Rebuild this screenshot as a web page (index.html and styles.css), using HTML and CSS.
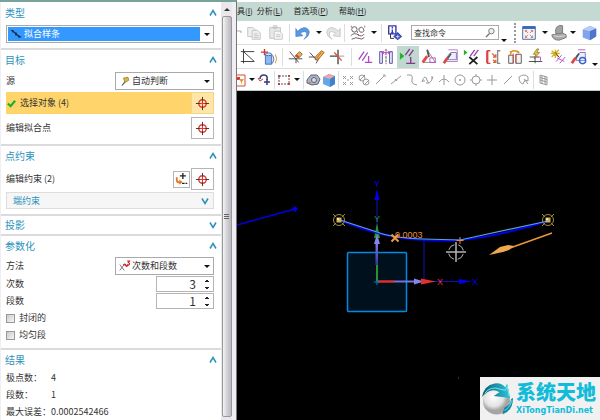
FILE: index.html
```html
<!DOCTYPE html>
<html lang="zh-CN">
<head>
  <meta charset="UTF-8">
  <meta name="viewport" content="width=device-width, initial-scale=1.0">
  <title>拟合样条</title>
  <link rel="stylesheet" href="styles.css">
</head>
<body>
  <svg class="defs" aria-hidden="true">
    <symbol id="chevron" viewBox="0 0 8 8"><path d="M1 6.500 4 1.500 7 6.500" fill="none" stroke="#2c92bd" stroke-width="1.500"/></symbol>
    <symbol id="target" viewBox="0 0 16 16">
      <circle cx="8" cy="8" r="4" fill="none" stroke="#e23a32" stroke-width="1.500"/>
      <path d="M8 1v14M1 8h14" stroke="#333"/>
      <path d="M8 5v6M5 8h6" stroke="#e23a32"/>
    </symbol>
    <symbol id="node" viewBox="0 0 14 14">
      <circle cx="7" cy="7" r="5.500" fill="none" stroke="#a08c3c"/>
      <path d="M1 1l3 3M13 1l-3 3M1 13l3-3M13 13l-3-3" stroke="#a08c3c"/>
      <path d="M4.500 4.500h5v5h-5z" fill="#c9b25c"/><path d="M5 5h2v2H5z" fill="#f0e4ab"/>
    </symbol>
  </svg>

  <div class="app">
    <aside class="dialog">
      <form class="sections">
        <section class="section">
          <h2>类型<svg><use href="#chevron"/></svg></h2>
          <div class="combo combo-type">
            <svg viewBox="0 0 16 16"><path d="M1 3c4 0 5 3 7 5s4 4 7 4" fill="none" stroke="#152b45" stroke-width="1.500"/><path d="M4 3v3M8 6v4M12 10v3" stroke="#152b45" stroke-width="2"/></svg>
            <select aria-label="类型"><option>拟合样条</option></select>
          </div>
        </section>

        <section class="section section-target">
          <h2>目标<svg><use href="#chevron"/></svg></h2>
          <div class="row">
            <label for="source">源</label>
            <div class="combo combo-half">
              <svg viewBox="0 0 16 16"><path d="M4 14l5-6" stroke="#444" stroke-width="1.500"/><path d="M6 4l6-1 1 4-5 3z" fill="#d9b93c" stroke="#8c7a3c"/></svg>
              <select id="source"><option>自动判断</option></select>
            </div>
          </div>
          <div class="row row-active">
            <span class="pick"><svg viewBox="0 0 10 10"><path d="M1 5l3 3 5-6" fill="none" stroke="#1faf2e" stroke-width="2.500"/></svg>选择对象 (4)</span>
            <button type="button" class="pick-btn" aria-label="选择对象"><svg><use href="#target"/></svg></button>
          </div>
          <div class="row">
            <span>编辑拟合点</span>
            <button type="button" class="pick-btn" aria-label="编辑拟合点"><svg><use href="#target"/></svg></button>
          </div>
        </section>

        <section class="section">
          <h2>点约束<svg><use href="#chevron"/></svg></h2>
          <div class="row">
            <span>编辑约束 (2)</span>
            <span class="buttons">
              <button type="button" class="add-btn" aria-label="添加"><svg viewBox="0 0 16 16"><path d="M9 1v7M5.500 4.500h7" stroke="#222" stroke-width="1.500"/><path d="M8 13h6" stroke="#222" stroke-width="1.500" stroke-dasharray="3 1"/><path d="M2 6v3q0 3 4 3" fill="none" stroke="#e8711c" stroke-width="2"/><path d="M5 8.500v6l3.500-3z" fill="#e8711c"/></svg></button>
              <button type="button" class="pick-btn" aria-label="编辑约束"><svg><use href="#target"/></svg></button>
            </span>
          </div>
          <button type="button" class="subgroup">端约束<svg class="down"><use href="#chevron"/></svg></button>
        </section>

        <section class="section section-closed">
          <h2>投影<svg class="down"><use href="#chevron"/></svg></h2>
        </section>

        <section class="section section-params">
          <h2>参数化<svg><use href="#chevron"/></svg></h2>
          <div class="row">
            <label for="method">方法</label>
            <div class="combo combo-half">
              <svg viewBox="0 0 16 16"><path d="M1 6l6 8M7 6l-6 8" stroke="#555"/><path d="M6 7q2-3 3 0t3-1" fill="none" stroke="#cf2027" stroke-width="2"/><path d="M11 1.500h3l-1.500 2q2 0 1.500 2t-3 1" fill="none" stroke="#cf2027" stroke-width="1.500"/></svg>
              <select id="method"><option>次数和段数</option></select>
            </div>
          </div>
          <div class="row">
            <label for="degree">次数</label>
            <div class="spin"><input id="degree" type="text" value="3"><i></i></div>
          </div>
          <div class="row">
            <label for="segments">段数</label>
            <div class="spin"><input id="segments" type="text" value="1"><i></i></div>
          </div>
          <label class="check"><input type="checkbox">封闭的</label>
          <label class="check"><input type="checkbox">均匀段</label>
        </section>

        <section class="section section-result">
          <h2>结果<svg><use href="#chevron"/></svg></h2>
          <dl>
            <dt>极点数：</dt><dd>4</dd>
            <dt>段数：</dt><dd>1</dd>
            <dt>最大误差：</dt><dd>0.0002542466</dd>
          </dl>
        </section>
      </form>
      <div class="scrollbar"><div class="thumb"></div></div>
    </aside>

    <main class="workspace">
      <nav class="menubar">
        <a href="#">具(<u>I</u>)</a>
        <a href="#">分析(<u>L</u>)</a>
        <a href="#">首选项(<u>P</u>)</a>
        <a href="#">帮助(<u>H</u>)</a>
      </nav>

      <div class="toolbar">
        <span class="edge"><svg viewBox="0 0 6 20"><path d="M0 8h4v2" fill="none" stroke="#aaa"/></svg></span>
        <button class="tool" aria-label="复制"><svg viewBox="0 0 20 20" fill="#eee" stroke="#c4c4c4"><path d="M3 4h6l3 3v7H3z"/><path d="M8 7h6l3 3v7H8z"/><path d="M10 11h4M10 13h5M10 15h5"/></svg></button>
        <button class="tool" aria-label="粘贴"><svg viewBox="0 0 20 20" fill="#e8e8e8" stroke="#c4c4c4"><path d="M3 4h12v12H3zM7 2h4v3H7z"/><path d="M8 8h6l3 3v6H8z" fill="#f6f6f6"/><path d="M10 12h5M10 14h5"/></svg></button>
        <span class="sep"></span>
        <button class="tool" aria-label="撤消"><svg viewBox="0 0 20 20"><path d="M2 5v9l8-1-3-3q6-3 7 0t-3 7q6-3 6-8-1-5-6-5-4 1-7 4z" fill="#5a98e2" stroke="#3a78bd" stroke-width=".6"/></svg></button>
        <span class="caret"></span>
        <button class="tool small" aria-label="重做"><svg viewBox="0 0 20 20"><path d="M18 5v9l-8-1 3-3q-6-3-7 0t3 7q-6-3-6-8 1-5 6-5 4 1 7 4z" fill="#e4e4e4" stroke="#c6c6c6"/></svg></button>
        <span class="sep"></span>
        <button class="tool" aria-label="曲线"><svg viewBox="0 0 20 20" fill="none" stroke="#555"><circle cx="6" cy="6" r="3"/><path d="M11 5q3-3 5 0t-1 4q-4 1-4-4M2 13q4-4 8-1t7-1M3 17q5-3 8-1t6-1"/><path d="M2 3h1M9 9h1M17 3h1M10 12h1" stroke="#d44" stroke-width="2"/></svg></button>
        <span class="caret"></span>
        <span class="sep"></span>
        <button class="tool" aria-label="信息"><svg viewBox="0 0 20 20"><path d="M3 2h8v9H3z" fill="#fff" stroke="#3439a8" stroke-width="1.500"/><path d="M7 3v2M7 6v4M5.500 10h3" stroke="#3439a8" stroke-width="1.500"/><path d="M5 11v5h4" fill="none" stroke="#222"/><path d="M13 9l5 5-5 4-5-4z" fill="#3d4db8"/><path d="M11 14h4M13 12v4" stroke="#cbd5ff"/></svg></button>
        <div class="search">
          <input type="text" value="查找命令" aria-label="查找命令">
          <svg viewBox="0 0 12 12"><circle cx="7" cy="4.500" r="3" fill="#eee" stroke="#777"/><path d="M5 7l-4 4" stroke="#777" stroke-width="1.500"/></svg>
        </div>
        <span class="caret low"></span>
        <span class="grip"></span>
        <button class="tool" aria-label="适合窗口"><svg viewBox="0 0 20 20"><path d="M3 3h14v14H3z" fill="#f1f6fd" stroke="#3b62ad"/><path d="M3 4h14" stroke="#3567c2" stroke-width="3"/><path d="M6 7l3 3M14 7l-3 3M6 15l3-3M14 15l-3-3M6 9V7h2M12 7h2v2M6 13v2h2M12 15h2v-2" fill="none" stroke="#e46a42"/></svg></button>
        <span class="caret"></span>
        <button class="tool small" aria-label="定向视图"><svg viewBox="0 0 20 20"><path d="M7 4q4-4 7-2v9l-7 1q-2-4 0-8z" fill="#a2a2a2" stroke="#777"/><path d="M2 12l12-2 4 2v3l-8 3q-7 0-8-6z" fill="#aaa" stroke="#777"/><path d="M4 13q6 2 13 0" fill="none" stroke="#ddd"/></svg></button>
        <span class="caret"></span>
        <button class="tool" aria-label="着色"><svg viewBox="0 0 20 20"><path d="M3 6l8-4 7 3v9l-7 4-8-3z" fill="#7fa5ec"/><path d="M3 6l8-4 7 3-7 3z" fill="#b4cdf8"/><path d="M11 8l7-3v9l-7 4z" fill="#5274c8"/></svg></button>
      </div>

      <div class="toolbar">
        <button class="tool" aria-label="草图"><svg viewBox="0 0 20 20"><path d="M2 4h15M5 1v16M5 4l12 11M2 15h15" fill="none" stroke="#333"/></svg></button>
        <button class="tool" aria-label="添加体"><svg viewBox="0 0 20 20"><path d="M5 1v7M1 4.500h8" stroke="#dc2f2f" stroke-width="1.500"/><path d="M6 7h7v11H6z" fill="#8eb8ee" stroke="#3d69b4"/><ellipse cx="9.500" cy="7" rx="3.500" ry="1.500" fill="#d3e4fa" stroke="#3d69b4"/><path d="M14 8q3 4 0 9" fill="none" stroke="#3d69b4"/><path d="M17 7q3 5 0 10" fill="none" stroke="#df8b2e"/></svg></button>
        <span class="sep"></span>
        <button class="tool" aria-label="快速修剪"><svg viewBox="0 0 20 20"><path d="M3 4l10 12M2 12h15M10 11v6" stroke="#444" fill="none"/><path d="M9 9l5-5 3 3-4 4z" fill="#e6b34a" stroke="#8a6322"/><path d="M9 9l2-2 3 3-2 1z" fill="#d34141"/></svg></button>
        <button class="tool" aria-label="快速延伸"><svg viewBox="0 0 20 20"><path d="M2 5l8 9M1 10h7M9 17l4-7" stroke="#444" fill="none"/><path d="M8 13l1-4 6-6 3 2-6 7z" fill="#efbd4f" stroke="#9b5c20"/><path d="M10 11l5-6" stroke="#df4d28"/></svg></button>
        <button class="tool" aria-label="制作拐角"><svg viewBox="0 0 20 20"><path d="M1 9h9M10 9v9M10 2v7" stroke="#444" stroke-width="1.500"/><path d="M10 9h7" stroke="#999"/><path d="M6 5l8 9" stroke="#e84b3b" stroke-width="1.500"/></svg></button>
        <span class="sep"></span>
        <button class="tool" aria-label="几何约束"><svg viewBox="0 0 20 20"><path d="M3 13l6-9M7 14l6-9M14 9v7M10 16h8" stroke="#b04bc4" stroke-width="1.500"/></svg></button>
        <button class="tool" aria-label="设为对称"><svg viewBox="0 0 20 20"><path d="M6 4H3v13h3zM14 4h3v13h-3z" fill="#ececff" stroke="#4a459d"/><path d="M10 1v17" stroke="#444" stroke-dasharray="3 1"/><path d="M5 5h10M8 3L6 5l2 2M12 3l2 2-2 2" fill="none" stroke="#c13dc3"/></svg></button>
        <button class="tool on" aria-label="显示约束"><svg viewBox="0 0 20 20"><path d="M1 5v8l5-4z" fill="#26b32b"/><path d="M7 8l5-7M11 9l5-7M13 10v7M8 17h10" stroke="#8b3590" stroke-width="1.500"/></svg></button>
        <button class="tool" aria-label="自动约束"><svg viewBox="0 0 20 20"><path d="M8 2l9 14M3 16h15" fill="none" stroke="#888"/><path d="M11 11h6v5h-6z" fill="none" stroke="#c04ac3"/><path d="M8 2l2 8" stroke="#555" stroke-width="2"/><path d="M8 9l-5 7" stroke="#e34848" stroke-width="3"/></svg></button>
        <button class="tool" aria-label="自动尺寸"><svg viewBox="0 0 20 20"><path d="M6 13V9l4-4h6v8z" fill="#eef" stroke="#7676ae"/><path d="M7 2h10v13M5 15h12" fill="none" stroke="#b576c5"/><path d="M10 6l-4 6" stroke="#555" stroke-width="2"/><path d="M6 11l-4 6" stroke="#df4545" stroke-width="3"/></svg></button>
        <button class="tool" aria-label="关系查找"><svg viewBox="0 0 20 20"><path d="M1 2v6l4-3z" fill="#26b32b"/><path d="M8 9l5-7M12 9l5-7" stroke="#984aa4" stroke-width="1.500"/><path d="M7 10l9 8M16 10l-9 8" stroke="#222" stroke-width="2"/></svg></button>
        <button class="tool" aria-label="转换参考"><svg viewBox="0 0 20 20"><path d="M6 3H3v14h3M2 3v14" fill="none" stroke="#dc4444" stroke-width="1.500"/><path d="M8 6l4 4M9 13l3 3M12 7v3H9M12 13v3H9" fill="none" stroke="#dc6a33" stroke-width="1.500"/><path d="M17 3h-3v14h3" fill="none" stroke="#888" stroke-width="1.500"/></svg></button>
        <button class="tool" aria-label="备选解"><svg viewBox="0 0 20 20"><path d="M3 8h5v9H3zM11 7h6v10h-6z" fill="#f3f3f3" stroke="#555"/><path d="M5 8q0-5 4-5t5 3M4 4h3M12 3l3 2" fill="none" stroke="#e88d2b" stroke-width="1.500"/><path d="M8 6v11M11 7v10" stroke="#c54747"/></svg></button>
        <button class="tool" aria-label="自动判断约束"><svg viewBox="0 0 20 20"><path d="M2 15h15M9 9v8M3 10h10" stroke="#444" fill="none"/><path d="M11 10h4v5" fill="none" stroke="#c04ac3"/><path d="M11 1L7 7h3l-2 5 6-7h-3l2-4z" fill="#f4c936" stroke="#71612b" stroke-width=".7"/></svg></button>
        <button class="tool" aria-label="连续约束"><svg viewBox="0 0 20 20"><path d="M7 2v9M2 6h10M3 3l8 7M11 2L3 10" stroke="#d7af23" stroke-width="1.500"/><path d="M7 5l4 5" stroke="#444"/><path d="M8 15l6-7M12 17l6-7M9 11l8 4" stroke="#b04bc4"/></svg></button>
        <button class="tool" aria-label="连续尺寸"><svg viewBox="0 0 20 20"><path d="M7 9l4-4h6v9H7z" fill="#eef" stroke="#7676ae"/><path d="M9 2h8" stroke="#c54ac3"/><circle cx="14" cy="14" r="3.500" fill="none" stroke="#375dd8" stroke-width="1.500"/><path d="M10 6l-4 6" stroke="#555" stroke-width="2"/><path d="M6 11l-4 6" stroke="#df4545" stroke-width="3"/></svg></button>
        <span class="caret low"></span>
      </div>

      <div class="toolbar toolbar-snap">
        <button class="tool first" aria-label="过滤器"><svg viewBox="0 0 10 20"><path d="M0 5h8v11H0" fill="#fff" stroke="#dd4444"/><path d="M0 7h3v3H0z" fill="#d33"/><path d="M2 9h5l-2 3v3l-1-3z" fill="#e79b2d"/></svg></button>
        <span class="caret"></span>
        <button class="tool" aria-label="重置"><svg viewBox="0 0 16 20"><path d="M3 9q0-4 4-4t3 5" fill="none" stroke="#333b76" stroke-width="1.500"/><path d="M1 8l2 3 3-2" fill="none" stroke="#c33"/><path d="M10 9v6M7 12h6" stroke="#333b76" stroke-width="1.500"/></svg></button>
        <span class="sep"></span>
        <button class="tool" aria-label="矩形选择"><svg viewBox="0 0 16 20"><path d="M3 6h10v8H3z" fill="none" stroke="#555" stroke-dasharray="2 1"/><path d="M2 5h2v2H2zM12 5h2v2h-2zM2 13h2v2H2zM12 13h2v2h-2z" fill="#dc3a3a"/></svg></button>
        <span class="caret"></span>
        <span class="sep"></span>
        <button class="tool" aria-label="实体"><svg viewBox="0 0 16 20"><path d="M2 10l4-5h6l3 4-2 5-6 1-5-2z" fill="#aeb6c5" stroke="#5b6372"/><circle cx="9" cy="10" r="2.500" fill="#d7dce5" stroke="#5b6372"/><path d="M4 12l2 1" stroke="#d55"/></svg></button>
        <button class="tool" aria-label="长方体"><svg viewBox="0 0 16 20"><path d="M2 7l6-3 6 2v8l-5 3-7-3z" fill="#65a5e8"/><path d="M2 7l6-3 6 2-5 3z" fill="#eba6a5"/><path d="M9 9l5-3v8l-5 3z" fill="#4181cc"/></svg></button>
        <span class="sep"></span>
        <button class="tool grey" aria-label="启用捕捉"><svg viewBox="0 0 16 20"><path d="M3 6l3 3M6 6L3 9M10 6l3 3M13 6l-3 3M3 12l3 3M6 12l-3 3M10 12l3 3M13 12l-3 3M7 10h2"/></svg></button>
        <button class="tool grey" aria-label="清除捕捉"><svg viewBox="0 0 16 20"><circle cx="6" cy="8" r="3"/><circle cx="10" cy="12" r="3"/><path d="M4 10l5-5M8 15l5-5"/></svg></button>
        <button class="tool grey" aria-label="端点"><svg viewBox="0 0 16 20"><path d="M4 14l8-8M11 5h2v2"/></svg></button>
        <button class="tool grey" aria-label="中点"><svg viewBox="0 0 16 20"><path d="M3 14l10-8M7 9l2 2"/></svg></button>
        <button class="tool grey" aria-label="控制点"><svg viewBox="0 0 16 20"><path d="M3 5h4q2 1 1 5t5 5"/></svg></button>
        <button class="tool grey" aria-label="样条点"><svg viewBox="0 0 16 20"><path d="M2 12q3-9 5-2t6-3M2 11h3M6 13h3M12 6v3"/></svg></button>
        <button class="tool grey" aria-label="交点"><svg viewBox="0 0 16 20"><path d="M3 12q5-6 10 0M8 5v10"/></svg></button>
        <button class="tool grey" aria-label="圆心"><svg viewBox="0 0 16 20"><circle cx="8" cy="10" r="5"/><path d="M7 10h2M8 9v2"/></svg></button>
        <button class="tool grey" aria-label="象限点"><svg viewBox="0 0 16 20"><circle cx="8" cy="10" r="4"/><path d="M7 5h2M7 15h2M3 9v2M13 9v2"/></svg></button>
        <button class="tool grey" aria-label="现有点"><svg viewBox="0 0 16 20"><path d="M8 5v10M3 10h10"/></svg></button>
        <button class="tool grey" aria-label="线上点"><svg viewBox="0 0 16 20"><path d="M4 14l8-8M5 13l-1 1"/></svg></button>
        <button class="tool grey" aria-label="面上点"><svg viewBox="0 0 16 20"><path d="M3 7q5-4 9 0v4l-3-1-2 4q-4-1-4-7zM8 9l4 5"/></svg></button>
        <span class="sep"></span>
        <button class="tool grey" aria-label="栅格点"><svg viewBox="0 0 16 20"><path d="M5 5l7 2v8l-7-2zM5 7.500l7 2M5 10l7 2M7 6v8M10 6v8"/></svg></button>
      </div>

      <div class="viewport">
        <svg class="scene" viewBox="237 91 363 329">
          <defs>
            <linearGradient id="axis" x1="0" y1="1" x2="0" y2="0"><stop offset="0" stop-color="#3434a0"/><stop offset="1" stop-color="#8585f0"/></linearGradient>
          </defs>
          <path d="M237 225l58-16" stroke="#0000e6" stroke-width="1.500"/>
          <path d="M295 206l3 3-3 3-3-3z" fill="#0000e6"/>
          <rect x="347.500" y="252.500" width="59" height="59" rx="1" fill="#00111d" stroke="#008ae6" stroke-width="1.500"/>
          <path d="M377 280v-83M377 281.500h93M424 240v41" stroke="#1111b8"/>
          <path d="M377 189l2.500 11h-5zM471 281.500l-12-2.500v5z" fill="#0000ee"/>
          <path d="M377 281v-48" stroke="#249630" stroke-width="2"/>
          <path d="M377 223l3 15h-6z" fill="#249630"/>
          <path d="M375.500 265V240h2.500v25z" fill="url(#axis)"/>
          <path d="M377 234l3 10h-6z" fill="#8585f0"/>
          <path d="M378 281.500h16" stroke="#d8322f" stroke-width="2.500"/>
          <path d="M394 281.500h25" stroke="#7474df" stroke-width="2"/>
          <path d="M424 281.500l-10-3v6z" fill="#8585f0"/>
          <path d="M436 281.500l-15-3v6z" fill="#e0312d"/>
          <path d="M374 282h6M377 279v6" stroke="#0c83b5"/>
          <path d="M340 220q42 18 84 20 20 1 37 0 39-4 87-19" fill="none" stroke="#0000f0" stroke-width="2"/>
          <path d="M340 220l37 12q15 6 47 7l36 1 88-19" fill="none" stroke="#5ba4cc" stroke-width="1.200"/>
          <use href="#node" x="332" y="213" width="14" height="14"/>
          <use href="#node" x="541" y="213" width="14" height="14"/>
          <text class="axis-blue" x="374" y="187">Y</text>
          <text class="axis-green" x="374" y="222">Y</text>
          <text class="axis-red" x="437" y="285">X</text>
          <text class="axis-blue" x="472" y="285">X</text>
          <text class="deviation" x="395" y="238">0.0003</text>
          <path d="M391.500 234.500l7 7M398.500 234.500l-7 7" stroke="#f39a3b" stroke-width="2"/>
          <path d="M460 237v7M456.500 240.500h7" stroke="#e88b4f"/>
          <path d="M552 233l-42 15" stroke="#ec9637" stroke-width="1.500"/>
          <path d="M489 255l11-8 8-2 6 1-5 4-6 2z" fill="#edaa4d"/>
          <g fill="none" stroke="#b4b4b4">
            <circle cx="456" cy="252" r="7.500" stroke-dasharray="8 3.780" stroke-dashoffset="-2"/>
            <path d="M456 242v20M446 252h20" stroke-width="1.500"/>
          </g>
          <path d="M458 378h1" stroke="#6b6b3b"/>
        </svg>

        <div class="watermark">
          <svg viewBox="0 0 34 34">
            <defs>
              <radialGradient id="ball" cx=".4" cy=".35"><stop offset="0" stop-color="#fff"/><stop offset=".7" stop-color="#e3e3e3"/><stop offset="1" stop-color="#a5a5a5"/></radialGradient>
              <linearGradient id="band"><stop offset="0" stop-color="#0c5e74"/><stop offset="1" stop-color="#2bc6de"/></linearGradient>
            </defs>
            <circle cx="16" cy="19" r="14" fill="url(#ball)"/>
            <path d="M1 15Q3 3 14 1q7-1 11 4l2-4 3 15-17-2 6-4Q10 4 1 15z" fill="url(#band)"/>
            <path d="M4 11Q10 3 20 7l5 1 2-4 2 10" fill="none" stroke="#7fe3ee"/>
            <path d="M33 16q0 13-11 17l2-7 6-4 1-5z" fill="#15849c"/>
            <path d="M32 18q-2 8-8 11" fill="none" stroke="#36c6dc" stroke-width="1.500"/>
          </svg>
          <div class="brand"><b>系统天地</b><span>XiTongTianDi.net</span></div>
        </div>
      </div>
    </main>
  </div>
</body>
</html>
```

FILE: styles.css
```css
* {
  box-sizing: border-box;
}

body {
  margin: 0;
  font-family: "Noto Sans CJK SC", sans-serif;
  font-size: 9px;
  line-height: 14px;
  color: #333;
  background: #fff;
}

button, input, select {
  font: inherit;
  color: inherit;
  margin: 0;
  padding: 0;
  border: 0;
  background: none;
}

svg {
  display: block;
  flex: none;
}

.defs {
  position: absolute;
  width: 0;
  height: 0;
}

.app {
  display: flex;
  height: 100vh;
  overflow: hidden;
}

/* dialog on the left */
.dialog {
  display: flex;
  flex: none;
  width: 237px;
  border-top: 2px solid #78a39b;
  border-right: 1px solid #777;
  background: #f1eef3;
}

.sections {
  flex: 1;
  margin-left: 1px;
  padding-top: 1px;
  background: #fff;
  overflow: hidden;
}

.section {
  display: flex;
  flex-direction: column;
  gap: 2px;
  padding: 0 7px 5px 5px;
  border-bottom: 2px solid #dcdadd;
}

.section h2 {
  display: flex;
  align-items: center;
  justify-content: space-between;
  height: 20px;
  margin: 0 -3px 0 -1px;
  font-size: 10px;
  font-weight: 400;
  color: #2c92bd;
}

.section-target {
  padding-bottom: 5px;
}

.section-closed {
  padding-bottom: 0;
}

.section-closed h2 {
  height: 18px;
}

.section-params {
  gap: 1px;
}

.section h2 svg,
.subgroup svg {
  width: 8px;
  height: 8px;
}

.down {
  transform: rotate(180deg);
}

.row {
  display: flex;
  align-items: center;
  justify-content: space-between;
}

.combo {
  position: relative;
  border: 1px solid #aaa;
  height: 18px;
}

.combo svg {
  position: absolute;
  left: 3px;
  top: 2px;
  width: 12px;
  height: 12px;
}

.combo::after,
.caret::after {
  content: "";
  border: 3px solid transparent;
  border-top-color: #111;
  border-bottom: 0;
}

.combo::after {
  position: absolute;
  right: 3px;
  top: 7px;
}

.combo select {
  display: block;
  width: 100%;
  height: 16px;
  padding-left: 16px;
  appearance: none;
}

.combo-type select {
  color: #fff;
  border: 1px solid #fff;
  border-right-width: 13px;
  background: #3399ff;
}

.combo-half {
  width: 99px;
}

.row-active {
  margin-bottom: 1px;
  background: #ffd56b;
}

.pick {
  display: flex;
  align-items: center;
  gap: 4px;
  padding-left: 1px;
}

.pick svg {
  width: 9px;
  height: 9px;
}

.pick-btn,
.add-btn {
  display: flex;
  align-items: center;
  justify-content: center;
  width: 23px;
  height: 22px;
  border: 1px solid #b5b5b5;
  background: #fff;
}

.row-active .pick-btn {
  border-color: #f3d48a;
  background: #ffe6a6;
}

.pick-btn svg {
  width: 15px;
  height: 15px;
}

.add-btn {
  width: 17px;
  height: 17px;
}

.add-btn svg {
  width: 14px;
  height: 14px;
}

.buttons {
  display: flex;
  align-items: center;
  gap: 1px;
}

.subgroup {
  display: flex;
  align-items: center;
  justify-content: space-between;
  height: 17px;
  padding: 0 4px 0 6px;
  border: 1px solid #ddd;
  background: #f6f6f6;
  color: #2c92bd;
}

.spin {
  display: flex;
  align-items: center;
  width: 58px;
  height: 16px;
  padding-right: 4px;
  border: 1px solid #b5b5b5;
}

.spin input {
  width: 100%;
  min-width: 0;
  padding-right: 9px;
  font-size: 12px;
  text-align: right;
}

.spin i {
  flex: none;
  height: 9px;
  border: 2px solid transparent;
  border-top: 3px solid transparent;
  border-bottom: 3px solid transparent;
  background:
    linear-gradient(#222, #222) center top / 2px 1px no-repeat border-box,
    linear-gradient(#222, #222) center 1px / 4px 1px no-repeat border-box,
    linear-gradient(#222, #222) center 7px / 4px 1px no-repeat border-box,
    linear-gradient(#222, #222) center bottom / 2px 1px no-repeat border-box;
}

.check {
  display: flex;
  align-items: center;
  gap: 4px;
  height: 16px;
}

.check input {
  width: 9px;
  height: 9px;
  border: 1px solid #999;
  background: linear-gradient(135deg, #ccc, #f5f5f5);
  appearance: none;
}

.section-result {
  gap: 1px;
  padding-bottom: 0;
  border: 0;
}

dl {
  display: grid;
  grid-template-columns: 45px 1fr;
  row-gap: 3px;
  margin: 0;
}

dt {
  white-space: nowrap;
}

dd {
  margin: 0;
}

.scrollbar {
  display: flex;
  flex-direction: column;
  align-items: center;
  width: 11px;
  margin-right: 4px;
  padding: 6px 0 3px;
  background: #e9e7ec;
}

.scrollbar::before {
  content: "";
  border: 3px solid transparent;
  border-top: 0;
  border-bottom-color: #333;
}

.thumb {
  display: grid;
  place-items: center;
  flex: 1;
  width: 10px;
  margin-top: 5px;
  border: 1px solid #999;
  border-radius: 2px;
  background: linear-gradient(90deg, #f4f4f5, #d2d2d6 50%, #b8b8be);
}

.thumb::after {
  content: "";
  width: 5px;
  height: 5px;
  background: repeating-linear-gradient(#666 0 1px, transparent 1px 2px);
}

/* menu and toolbars */
.workspace {
  display: flex;
  flex: 1;
  flex-direction: column;
  min-width: 0;
  padding-top: 2px;
}

.menubar {
  display: flex;
  flex: none;
  height: 19px;
  background: #c5d9d3;
  font-size: 8px;
  line-height: 18px;
}

.menubar a {
  margin-right: 11px;
  color: #222;
  text-decoration: none;
  white-space: nowrap;
}

.menubar a:first-child {
  margin-right: 4px;
}

.toolbar {
  display: flex;
  flex: none;
  align-items: center;
  height: 24px;
  border-bottom: 1px solid #ddd;
  overflow: hidden;
}

.edge svg {
  width: 6px;
  height: 20px;
}

.tool {
  display: flex;
  align-items: center;
  justify-content: center;
  flex: 0 1 22px;
  width: 22px;
  height: 22px;
}

.tool svg {
  width: 18px;
  height: 18px;
}

.tool.small {
  flex-basis: 16px;
}

.tool.on {
  background: #bfd8d0;
}

.sep {
  flex: none;
  width: 1px;
  height: 18px;
  margin: 0 2px;
  background: #ddd;
}

.caret {
  display: flex;
  align-items: center;
  justify-content: center;
  flex: none;
  width: 10px;
  height: 8px;
}

.caret.low {
  align-self: flex-end;
}

.grip {
  margin: 0 2px 0 5px;
  height: 20px;
  border-left: 2px dotted #999;
}

.search {
  display: flex;
  align-items: center;
  flex: none;
  width: 88px;
  height: 15px;
  margin-left: 5px;
  padding: 0 2px;
  border: 1px solid #aaa;
}

.search input {
  flex: 1;
  min-width: 0;
  font-size: 8px;
}

.search svg {
  width: 11px;
  height: 11px;
}

.toolbar-snap {
  height: 22px;
  border-bottom: 1px solid #b9ccc7;
}

.toolbar-snap .tool {
  flex: none;
  width: 16px;
  height: 20px;
}

.toolbar-snap .tool svg {
  width: 16px;
  height: 20px;
}

.toolbar-snap .first,
.toolbar-snap .first svg {
  width: 10px;
}

.toolbar-snap .sep {
  margin: 0 1px;
}

.grey {
  fill: none;
  stroke: #999;
}

/* graphics window */
.viewport {
  position: relative;
  flex: 1;
  min-height: 0;
  background: #000;
}

.scene {
  width: 100%;
  height: 100%;
}

.scene text {
  font-family: "Liberation Sans", sans-serif;
  font-size: 9px;
}

.scene .axis-blue {
  fill: #0000ee;
}

.scene .axis-green {
  fill: #249630;
}

.scene .axis-red {
  fill: #e0312d;
}

.scene .deviation {
  fill: #e2903f;
}

.watermark {
  position: absolute;
  right: 0;
  bottom: 0;
  display: flex;
  align-items: center;
  gap: 2px;
  width: 120px;
  height: 43px;
  padding-left: 1px;
  background: #f1f1f1;
  color: #10bcd9;
}

.watermark svg {
  width: 33px;
  height: 34px;
}

.brand {
  display: flex;
  flex-direction: column;
  white-space: nowrap;
}

.brand b {
  font-size: 20px;
  font-weight: 900;
  line-height: 24px;
}

.brand span {
  font-family: "DejaVu Sans", sans-serif;
  font-size: 8px;
  font-weight: 700;
}
```
